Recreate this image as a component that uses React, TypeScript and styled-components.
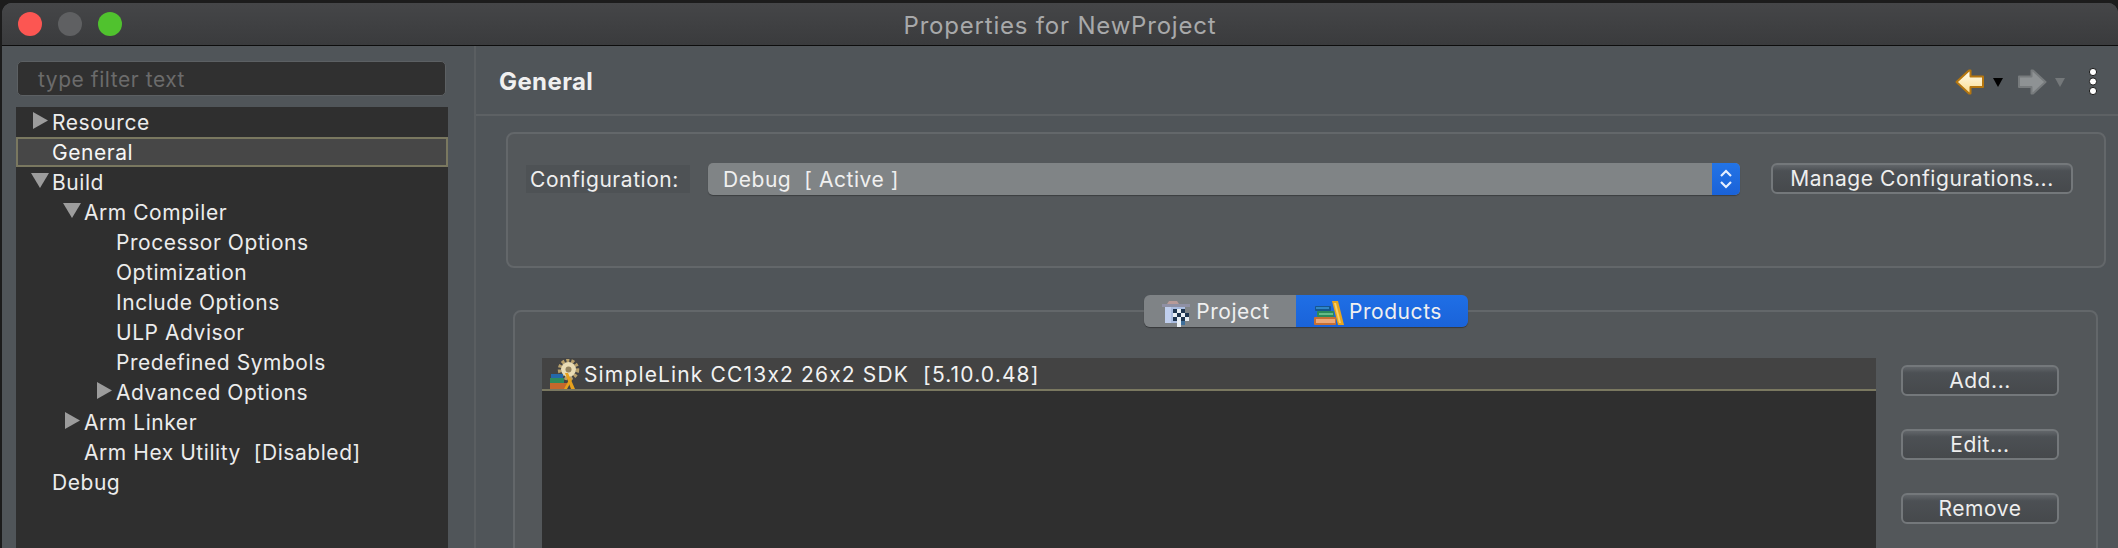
import React from 'react'
import styled, { createGlobalStyle } from 'styled-components'

const GlobalStyle = createGlobalStyle`
  html, body {
    margin: 0;
    padding: 0;
    background: #1c1c1c;
  }
  #root {
    width: 2118px;
    height: 548px;
    overflow: hidden;
  }
`

const Window = styled.div`
  width: 2116px;
  height: 545px;
  margin: 3px 0 0 2px;
  border-radius: 10px 10px 0 0;
  overflow: hidden;
  display: flex;
  flex-direction: column;
  background: #505559;
  font-family: Inter, "Liberation Sans", sans-serif;
  font-feature-settings: "calt" 0;
  color: #eeeeee;
`

const TitleBar = styled.header`
  position: relative;
  flex: none;
  height: 40px;
  display: flex;
  align-items: center;
  justify-content: center;
  padding-top: 2px;
  background: linear-gradient(#454648, #3a3b3d);
  border-bottom: 1px solid #0d0d0d;
  box-sizing: content-box;
  color: #a8a9aa;
  font-size: 24px;
  letter-spacing: 0.8px;
`

const Lights = styled.div`
  position: absolute;
  left: 16px;
  top: 9px;
  display: flex;
  gap: 16px;
`

const Light = styled.span<{ $color: string }>`
  width: 24px;
  height: 24px;
  border-radius: 50%;
  background: ${(p) => p.$color};
`

const Body = styled.div`
  flex: 1;
  min-height: 0;
  display: flex;
`

const LeftPane = styled.aside`
  flex: none;
  width: 474px;
  box-sizing: border-box;
  padding: 15px 26px 0 14px;
  display: flex;
  flex-direction: column;
  gap: 11px;
  border-right: 2px solid #5a5e61;
`

const FilterInput = styled.div`
  height: 35px;
  margin: 0 2px 0 1px;
  box-sizing: border-box;
  padding: 1px 0 0 20px;
  display: flex;
  align-items: center;
  background: #303030;
  border: 1px solid #5c6063;
  border-radius: 5px;
  color: #6b6b6b;
  font-size: 21px;
  letter-spacing: 0.55px;
`

const Tree = styled.ul`
  flex: 1;
  list-style: none;
  margin: 0;
  padding: 0;
  background: #2f2f2f;
`

const TreeRow = styled.li<{ $depth: number; $selected?: boolean }>`
  height: 30px;
  box-sizing: border-box;
  display: flex;
  align-items: center;
  padding-left: ${(p) => 36 + p.$depth * 32}px;
  position: relative;
  font-size: 21px;
  letter-spacing: 0.55px;
  white-space: pre;
  color: #ececec;
  ${(p) =>
    p.$selected &&
    `
    background: #474747;
    outline: 2px solid #7a7860;
    outline-offset: -2px;
    color: #f6f6f6;
  `}
`

const Twisty = styled.svg<{ $depth: number }>`
  position: absolute;
  left: ${(p) => 16 + p.$depth * 32}px;
  top: 4px;
  width: 18px;
  height: 19px;
  overflow: visible;
  fill: #9c9c9c;
`

const RightPane = styled.main`
  flex: 1;
  min-width: 0;
  display: flex;
  flex-direction: column;
`

const PageHeader = styled.div`
  flex: none;
  height: 70px;
  box-sizing: border-box;
  padding: 3px 20px 0 23px;
  display: flex;
  align-items: center;
  justify-content: space-between;
  border-bottom: 2px solid #5d6164;
`

const PageTitle = styled.h1`
  margin: 0;
  font-size: 24px;
  font-weight: 700;
  letter-spacing: 0.4px;
  color: #f0f0f0;
`

const HeaderTools = styled.div`
  display: flex;
  align-items: center;
`

const NavDrop = styled.svg`
  width: 10px;
  height: 9px;
  margin: 1px 14px 0 8px;
`

const ViewMenu = styled.svg`
  width: 10px;
  height: 29px;
  margin-left: 9px;
  overflow: visible;
`

const Content = styled.div`
  flex: 1;
  min-height: 0;
  padding: 16px 12px 0 30px;
  display: flex;
  flex-direction: column;
`

const ConfigGroup = styled.section`
  flex: none;
  height: 136px;
  box-sizing: border-box;
  padding: 29px 31px 0 18px;
  display: flex;
  align-items: flex-start;
  background: #54585b;
  border: 2px solid #63676a;
  border-radius: 8px;
`

const ConfigLabel = styled.label`
  flex: none;
  width: 164px;
  height: 28px;
  margin: 2px 18px 0 0;
  padding-left: 4px;
  box-sizing: border-box;
  display: flex;
  align-items: center;
  background: #4e5255;
  font-size: 21px;
  letter-spacing: 0.55px;
  color: #efefef;
`

const Select = styled.div`
  flex: 1;
  height: 32px;
  display: flex;
  align-items: center;
  justify-content: space-between;
  box-sizing: border-box;
  padding-left: 15px;
  background: #808486;
  border-radius: 5px;
  box-shadow: 0 1px 1px rgba(0, 0, 0, 0.3);
  overflow: hidden;
  font-size: 21px;
  letter-spacing: 0.55px;
  white-space: pre;
  color: #f0f0f0;
`

const SelectArrows = styled.span`
  width: 28px;
  height: 32px;
  display: flex;
  align-items: center;
  justify-content: center;
  background: linear-gradient(#2374e6, #1a62d8);
`

const PushButton = styled.button<{ $width: number }>`
  flex: none;
  width: ${(p) => p.$width}px;
  height: 31px;
  padding: 0;
  background: linear-gradient(#62666a 0, #4c5054 22%, #46494c 100%);
  border: 2px solid #74787b;
  border-radius: 6px;
  font: inherit;
  font-size: 21px;
  letter-spacing: 0.55px;
  color: #eeeeee;
`

const ManageButton = styled(PushButton)`
  margin-left: 31px;
`

const TabFolder = styled.section`
  position: relative;
  flex: 1;
  min-height: 0;
  margin: 42px 8px -10px 7px;
  box-sizing: border-box;
  padding: 46px 37px 0 27px;
  display: flex;
  gap: 25px;
  background: #53575a;
  border: 2px solid #63676a;
  border-radius: 8px;
`

const TabBar = styled.div`
  position: absolute;
  left: 629px;
  top: -17px;
  display: flex;
  height: 32px;
  border-radius: 6px;
  box-shadow: 0 1px 1px rgba(0, 0, 0, 0.35);
`

const Tab = styled.div<{ $active?: boolean; $width: number }>`
  width: ${(p) => p.$width}px;
  box-sizing: border-box;
  padding-right: 8px;
  display: flex;
  align-items: center;
  justify-content: center;
  gap: 4px;
  font-size: 21px;
  letter-spacing: 0.55px;
  color: #f0f0f0;
  border-radius: ${(p) => (p.$active ? '0 6px 6px 0' : '6px 0 0 6px')};
  background: ${(p) => (p.$active ? 'linear-gradient(#1f6fe6, #1a63d9)' : '#7f8386')};
  & > svg {
    margin-top: 5px;
  }
`

const ProductTable = styled.div`
  flex: 1;
  display: flex;
  flex-direction: column;
  background: #2f2f2f;
`

const ProductRow = styled.div`
  height: 33px;
  box-sizing: border-box;
  display: flex;
  align-items: center;
  gap: 4px;
  padding: 1px 0 0 8px;
  background: #434343;
  border-bottom: 2px solid #7a7860;
  font-size: 21px;
  letter-spacing: 1.15px;
  white-space: pre;
  color: #f2f2f2;
`

const SideButtons = styled.div`
  flex: none;
  width: 158px;
  padding-top: 7px;
  display: flex;
  flex-direction: column;
  gap: 33px;
`

const BackArrow = () => (
  <svg width="30" height="26" viewBox="0 0 30 26">
    <defs>
      <linearGradient id="backFill" x1="0" y1="0" x2="0" y2="1">
        <stop offset="0" stopColor="#fffdf0" />
        <stop offset="1" stopColor="#fbdc8e" />
      </linearGradient>
    </defs>
    <path
      d="M1.5 13 L14 1.5 H15.5 V7.5 H28 V18 H15.5 V24.5 H14 Z"
      fill="url(#backFill)"
      stroke="#b5760f"
      strokeWidth="2"
      strokeLinejoin="round"
    />
  </svg>
)

const ForwardArrow = () => (
  <svg width="30" height="26" viewBox="0 0 30 26">
    <path
      d="M28.5 13 L16 1.5 H14.5 V7.5 H2 V18 H14.5 V24.5 H16 Z"
      fill="#8e9294"
      stroke="#777b7d"
      strokeWidth="2"
      strokeLinejoin="round"
    />
  </svg>
)

const ViewMenuIcon = () => (
  <ViewMenu viewBox="0 0 10 29">
    {[5, 14.5, 24].map((cy) => (
      <circle key={cy} cx="5" cy={cy} r="3.6" fill="#ffffff" stroke="#1b1b1b" strokeWidth="1" />
    ))}
  </ViewMenu>
)

const ProjectIcon = () => (
  <svg width="30" height="26" viewBox="0 0 30 26">
    <path d="M7 0 H15 L17 3 H5 Z" fill="#b79a98" />
    <rect x="0" y="3" width="28" height="3" fill="#8f90a4" />
    <rect x="3" y="6" width="20" height="16" fill="#a9bce0" />
    <rect x="3" y="6" width="6" height="16" fill="#c0cfee" />
    <g fill="#1f3650">
      <rect x="11" y="8" width="4" height="4" />
      <rect x="19" y="8" width="4" height="4" />
      <rect x="15" y="12" width="4" height="4" />
      <rect x="23" y="12" width="4" height="4" />
      <rect x="11" y="16" width="4" height="4" />
      <rect x="19" y="16" width="4" height="4" />
    </g>
    <g fill="#e8eef4">
      <rect x="15" y="8" width="4" height="4" />
      <rect x="11" y="12" width="4" height="4" />
      <rect x="19" y="12" width="4" height="4" />
      <rect x="15" y="16" width="4" height="4" />
      <rect x="23" y="16" width="4" height="4" />
      <rect x="15" y="20" width="4" height="6" />
    </g>
    <rect x="19" y="20" width="4" height="4" fill="#3f6f9a" />
  </svg>
)

const BooksIcon = () => (
  <svg width="31" height="25" viewBox="0 0 31 25">
    <rect x="1" y="5" width="16" height="5" rx="1" fill="#17578f" />
    <rect x="2" y="6" width="13" height="2" fill="#2f86c8" />
    <rect x="3" y="10" width="17" height="6" rx="1" fill="#2c8a5a" />
    <rect x="5" y="12" width="14" height="2" fill="#66bb88" />
    <rect x="0" y="16" width="22" height="8" rx="1" fill="#c76f35" />
    <rect x="2" y="18" width="19" height="4" fill="#eaa878" />
    <path d="M18 0 H24 L30 24 H24 Z" fill="#e9a51c" />
    <path d="M20 2 L22 2 L27 22 H25 Z" fill="#f5cf6a" />
  </svg>
)

const ProductIcon = () => (
  <svg width="30" height="30" viewBox="0 0 30 30">
    <circle cx="18.5" cy="10.5" r="9" fill="none" stroke="#b8a06a" strokeWidth="3.5" strokeDasharray="3 2" />
    <circle cx="18.5" cy="10.5" r="7.5" fill="#e9dcb4" />
    <circle cx="18.5" cy="10.5" r="3" fill="#93835f" />
    <rect x="1" y="15" width="12" height="4" fill="#2468a8" />
    <rect x="0" y="19" width="14" height="5" fill="#2f8a5c" />
    <rect x="0" y="24" width="17" height="6" fill="#c4682c" />
    <path d="M15 14 H18 L25 30 H21 Z" fill="#e7a11d" />
    <path d="M14 30 L20 19 L22 21 L17 30 Z" fill="#e7a11d" />
  </svg>
)

const Chevrons = () => (
  <svg width="14" height="24" viewBox="0 0 14 24" fill="none" stroke="#e6efff" strokeWidth="2.2">
    <path d="M2 9 L7 4 L12 9" />
    <path d="M2 15 L7 20 L12 15" />
  </svg>
)

type TreeItem = { label: string; depth: number; twisty?: 'open' | 'closed'; selected?: boolean }

const treeItems: TreeItem[] = [
  { label: 'Resource', depth: 0, twisty: 'closed' },
  { label: 'General', depth: 0, selected: true },
  { label: 'Build', depth: 0, twisty: 'open' },
  { label: 'Arm Compiler', depth: 1, twisty: 'open' },
  { label: 'Processor Options', depth: 2 },
  { label: 'Optimization', depth: 2 },
  { label: 'Include Options', depth: 2 },
  { label: 'ULP Advisor', depth: 2 },
  { label: 'Predefined Symbols', depth: 2 },
  { label: 'Advanced Options', depth: 2, twisty: 'closed' },
  { label: 'Arm Linker', depth: 1, twisty: 'closed' },
  { label: 'Arm Hex Utility  [Disabled]', depth: 1 },
  { label: 'Debug', depth: 0 },
]

export default function App() {
  return (
    <>
      <GlobalStyle />
      <Window>
        <TitleBar>
          <Lights>
            <Light $color="#fc5652" />
            <Light $color="#5f6062" />
            <Light $color="#50c22e" />
          </Lights>
          Properties for NewProject
        </TitleBar>
        <Body>
          <LeftPane>
            <FilterInput>type filter text</FilterInput>
            <Tree>
              {treeItems.map((item) => (
                <TreeRow key={item.label} $depth={item.depth} $selected={item.selected}>
                  {item.twisty && (
                    <Twisty $depth={item.depth} viewBox="0 0 18 19">
                      {item.twisty === 'closed' ? (
                        <path d="M1 1 L16 9.5 L1 18 Z" />
                      ) : (
                        <path d="M-1 2 L17 2 L8 17 Z" />
                      )}
                    </Twisty>
                  )}
                  {item.label}
                </TreeRow>
              ))}
            </Tree>
          </LeftPane>
          <RightPane>
            <PageHeader>
              <PageTitle>General</PageTitle>
              <HeaderTools>
                <BackArrow />
                <NavDrop viewBox="0 0 10 9">
                  <path d="M0 0 H10 L5 9 Z" fill="#000000" />
                </NavDrop>
                <ForwardArrow />
                <NavDrop viewBox="0 0 10 9">
                  <path d="M0 0 H10 L5 9 Z" fill="#74787a" />
                </NavDrop>
                <ViewMenuIcon />
              </HeaderTools>
            </PageHeader>
            <Content>
              <ConfigGroup>
                <ConfigLabel>Configuration:</ConfigLabel>
                <Select>
                  Debug  [ Active ]
                  <SelectArrows>
                    <Chevrons />
                  </SelectArrows>
                </Select>
                <ManageButton $width={302}>Manage Configurations...</ManageButton>
              </ConfigGroup>
              <TabFolder>
                <TabBar>
                  <Tab $width={152}>
                    <ProjectIcon />
                    Project
                  </Tab>
                  <Tab $width={172} $active>
                    <BooksIcon />
                    Products
                  </Tab>
                </TabBar>
                <ProductTable>
                  <ProductRow>
                    <ProductIcon />
                    SimpleLink CC13x2 26x2 SDK  [5.10.0.48]
                  </ProductRow>
                </ProductTable>
                <SideButtons>
                  <PushButton $width={158}>Add...</PushButton>
                  <PushButton $width={158}>Edit...</PushButton>
                  <PushButton $width={158}>Remove</PushButton>
                </SideButtons>
              </TabFolder>
            </Content>
          </RightPane>
        </Body>
      </Window>
    </>
  )
}
